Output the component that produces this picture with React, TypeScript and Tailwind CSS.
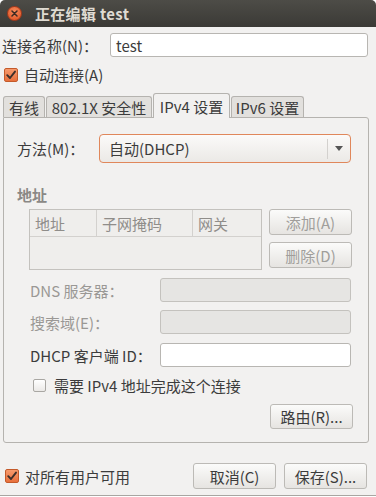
import React from "react";

const font = { fontFamily: '"Noto Sans CJK SC", "Noto Sans", sans-serif' };

function Check({ checked }: { checked: boolean }) {
  if (checked) {
    return (
      <div className="w-[14px] h-[14px] rounded-[2px] border border-[#c45a2a] bg-gradient-to-b from-[#f79a6c] to-[#e8703c] flex items-center justify-center shrink-0">
        <svg width="12" height="12" viewBox="0 0 12 12">
          <path d="M2.2 6.2 L5 9 L10 2.6" fill="none" stroke="#3d2f2a" strokeWidth="1.9" strokeLinecap="round" strokeLinejoin="round" />
        </svg>
      </div>
    );
  }
  return <div className="w-[13px] h-[13px] rounded-[2px] border border-[#a9a7a3] bg-gradient-to-b from-[#ffffff] to-[#ebe9e7] shrink-0" />;
}

function Btn({ children, disabled, className = "" }: { children: React.ReactNode; disabled?: boolean; className?: string }) {
  return (
    <div
      className={`flex items-center justify-center rounded-[3px] border border-[#bcbab6] bg-gradient-to-b from-[#fbfbfa] to-[#e6e4e1] text-[15px] ${disabled ? "text-[#a09e9b]" : "text-[#3c3c3c]"} ${className}`}
    >
      {children}
    </div>
  );
}

export default function App() {
  return (
    <div style={font} className="w-[376px] h-[497px] bg-[#ffffff] text-[#3c3c3c] text-[15px] leading-none">
      <div className="w-[376px] h-[496px] bg-[#f2f1f0] border-b border-[#a8a6a2] flex flex-col rounded-t-[5px] overflow-hidden">
        {/* title bar */}
        <div className="h-[27px] bg-gradient-to-b from-[#4d4c47] to-[#3b3a36] flex items-center shrink-0">
          <div className="ml-[7px] w-[15px] h-[15px] rounded-full bg-[radial-gradient(circle_at_50%_35%,#f68b5c,#dc4f20)] border border-[#a8391a] flex items-center justify-center">
            <svg width="7" height="7" viewBox="0 0 7 7">
              <path d="M1 1 L6 6 M6 1 L1 6" stroke="#3c2a22" strokeWidth="1.5" strokeLinecap="round" />
            </svg>
          </div>
          <div className="ml-[13px] text-[15px] font-bold text-[#dfdbd2] tracking-[0.3px]">正在编辑 test</div>
        </div>

        {/* name row */}
        <div className="mt-[6px] flex items-center h-[24px] pl-[2px]">
          <div className="w-[108px]">连接名称(N)：</div>
          <div className="w-[258px] h-[24px] rounded-[3px] border border-[#b8b6b2] bg-white flex items-center pl-[5px]">test</div>
        </div>

        {/* auto connect */}
        <div className="mt-[10px] flex items-center h-[15px] pl-[4px]">
          <Check checked />
          <div className="ml-[6px]">自动连接(A)</div>
        </div>

        {/* tabs */}
        <div className="mt-[11px] pl-[3px] flex items-end h-[24px]">
          <div className="w-[42px] h-[21px] border border-b-0 border-[#b5b3af] bg-[#e2e0dd] rounded-t-[3px] flex items-center justify-center">有线</div>
          <div className="ml-[1px] w-[106px] h-[21px] border border-b-0 border-[#b5b3af] bg-[#e2e0dd] rounded-t-[3px] flex items-center justify-center">802.1X 安全性</div>
          <div className="ml-[1px] w-[77px] h-[25px] border border-b-0 border-[#b5b3af] bg-[#f2f1f0] rounded-t-[3px] flex items-center justify-center relative z-10 -mb-[1px]">IPv4 设置</div>
          <div className="ml-[1px] w-[73px] h-[21px] border border-b-0 border-[#b5b3af] bg-[#e2e0dd] rounded-t-[3px] flex items-center justify-center">IPv6 设置</div>
        </div>

        {/* panel */}
        <div className="ml-[3px] w-[366px] h-[326px] border border-[#b5b3af] rounded-b-[3px] rounded-tr-[3px] flex flex-col">
          {/* method */}
          <div className="mt-[16px] flex items-center h-[29px]">
            <div className="pl-[13px] w-[95px]">方法(M)：</div>
            <div className="w-[252px] h-[29px] rounded-[4px] border border-[#e0875b] bg-gradient-to-b from-[#fbfaf9] to-[#ebe9e6] flex items-center">
              <div className="flex-1 pl-[9px]">自动(DHCP)</div>
              <div className="w-px h-[20px] bg-[#d3d1ce]" />
              <div className="w-[22px] flex items-center justify-center">
                <svg width="8" height="5" viewBox="0 0 8 5"><path d="M0 0 L8 0 L4 5 Z" fill="#555" /></svg>
              </div>
            </div>
          </div>

          {/* address heading */}
          <div className="mt-[23px] pl-[13px] font-bold text-[#8a8885] h-[16px] flex items-center">地址</div>

          {/* table + buttons */}
          <div className="mt-[7px] flex">
            <div className="ml-[25px] w-[233px] h-[61px] border border-[#c4c2be] bg-[#efeeec] flex flex-col">
              <div className="h-[27px] border-b border-[#d3d1ce] flex text-[#8f8d8a]">
                <div className="w-[67px] border-r border-[#d3d1ce] flex items-center pl-[5px]">地址</div>
                <div className="w-[96px] border-r border-[#d3d1ce] flex items-center pl-[5px]">子网掩码</div>
                <div className="flex-1 flex items-center pl-[5px]">网关</div>
              </div>
            </div>
            <div className="ml-[7px] flex flex-col">
              <Btn disabled className="w-[83px] h-[26px]">添加(A)</Btn>
              <Btn disabled className="mt-[7px] w-[83px] h-[26px]">删除(D)</Btn>
            </div>
          </div>

          {/* dns */}
          <div className="mt-[8px] flex items-center h-[24px]">
            <div className="pl-[26px] w-[156px] text-[#9a9895]">DNS 服务器：</div>
            <div className="w-[191px] h-[24px] rounded-[3px] border border-[#c4c2be] bg-[#e6e5e3]" />
          </div>
          <div className="mt-[8px] flex items-center h-[24px]">
            <div className="pl-[26px] w-[156px] text-[#9a9895]">搜索域(E)：</div>
            <div className="w-[191px] h-[24px] rounded-[3px] border border-[#c4c2be] bg-[#e6e5e3]" />
          </div>
          <div className="mt-[9px] flex items-center h-[24px]">
            <div className="pl-[26px] w-[156px]">DHCP 客户端 ID：</div>
            <div className="w-[191px] h-[24px] rounded-[3px] border border-[#b8b6b2] bg-white" />
          </div>

          {/* require checkbox */}
          <div className="mt-[11px] flex items-center h-[14px] pl-[29px]">
            <Check checked={false} />
            <div className="ml-[8px]">需要 IPv4 地址完成这个连接</div>
          </div>

          {/* route */}
          <div className="mt-[12px] flex justify-end pr-[15px]">
            <Btn className="w-[83px] h-[25px]">路由(R)...</Btn>
          </div>
        </div>

        {/* bottom */}
        <div className="mt-[20px] flex items-center h-[26px]">
          <div className="pl-[5px] flex items-center">
            <Check checked />
            <div className="ml-[6px]">对所有用户可用</div>
          </div>
          <div className="ml-auto flex pr-[9px]">
            <Btn className="w-[83px] h-[26px]">取消(C)</Btn>
            <Btn className="ml-[8px] w-[83px] h-[26px]">保存(S)...</Btn>
          </div>
        </div>
      </div>
    </div>
  );
}
